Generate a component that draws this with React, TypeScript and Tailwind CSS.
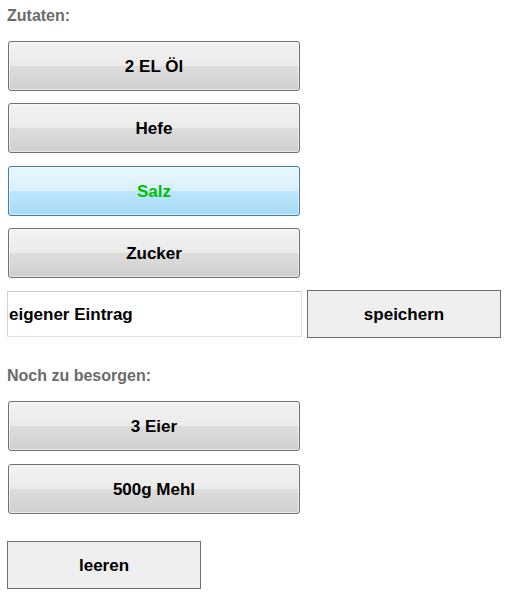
import { useState } from "react";

const aeroButton =
  "w-[292px] h-[50px] ml-px pt-[2px] rounded-[3px] border border-[#707070] bg-[linear-gradient(to_bottom,#f2f2f2_0%,#ebebeb_50%,#dddddd_50%,#cfcfcf_100%)] shadow-[inset_0_0_0_1px_rgba(255,255,255,0.55)] text-[17px] font-bold text-black";

const activeButton =
  "w-[292px] h-[50px] ml-px pt-[2px] rounded-[3px] border border-[#3c7fb1] bg-[linear-gradient(to_bottom,#eaf6fd_0%,#d9f0fc_50%,#bee6fd_50%,#a7d9f5_100%)] shadow-[inset_0_0_0_1px_rgba(255,255,255,0.55)] text-[17px] font-bold text-[#00c000]";

const flatButton =
  "w-[194px] h-[48px] pt-px border border-[#6e6e6e] bg-[#efefef] text-[17px] font-bold text-black";

export default function App() {
  const [zutaten] = useState(["2 EL Öl", "Hefe", "Salz", "Zucker"]);
  const [besorgen] = useState(["3 Eier", "500g Mehl"]);
  const [selected, setSelected] = useState("Salz");
  const [eintrag, setEintrag] = useState("eigener Eintrag");

  return (
    <div className="min-h-screen bg-white pl-[7px] font-['Liberation_Sans',Arial,sans-serif]">

      {/* Zutaten */}

      <h2 className="pt-[7px] text-[16px] leading-[18px] font-bold text-[#6b6b6b]">
        Zutaten:
      </h2>

      <div className="mt-[16px] flex flex-col">
        {zutaten.map((item, i) => (
          <div key={item} className={i === 0 ? "" : i === 2 ? "pt-[13px]" : "pt-[12px]"}>
            <button
              onClick={() => setSelected(item)}
              className={item === selected ? activeButton : aeroButton}
            >
              {item}
            </button>
          </div>
        ))}
      </div>

      {/* eigener Eintrag */}

      <div className="mt-[12px] flex items-center gap-[5px]">
        <input
          value={eintrag}
          onChange={(e) => setEintrag(e.target.value)}
          className="w-[295px] h-[46px] pt-px border border-[#e0e4e8] border-t-[#c9c9c9] border-l-[#d4d4d4] pl-px text-[17px] font-bold text-black outline-none"
        />

        <button className={flatButton}>speichern</button>
      </div>

      {/* Noch zu besorgen */}

      <h2 className="mt-[29px] text-[16px] leading-[18px] font-bold text-[#6b6b6b]">
        Noch zu besorgen:
      </h2>

      <div className="mt-[16px] flex flex-col gap-[13px]">
        {besorgen.map((item) => (
          <button key={item} className={aeroButton}>
            {item}
          </button>
        ))}
      </div>

      <div className="mt-[27px]">
        <button className={flatButton}>leeren</button>
      </div>

    </div>
  );
}
